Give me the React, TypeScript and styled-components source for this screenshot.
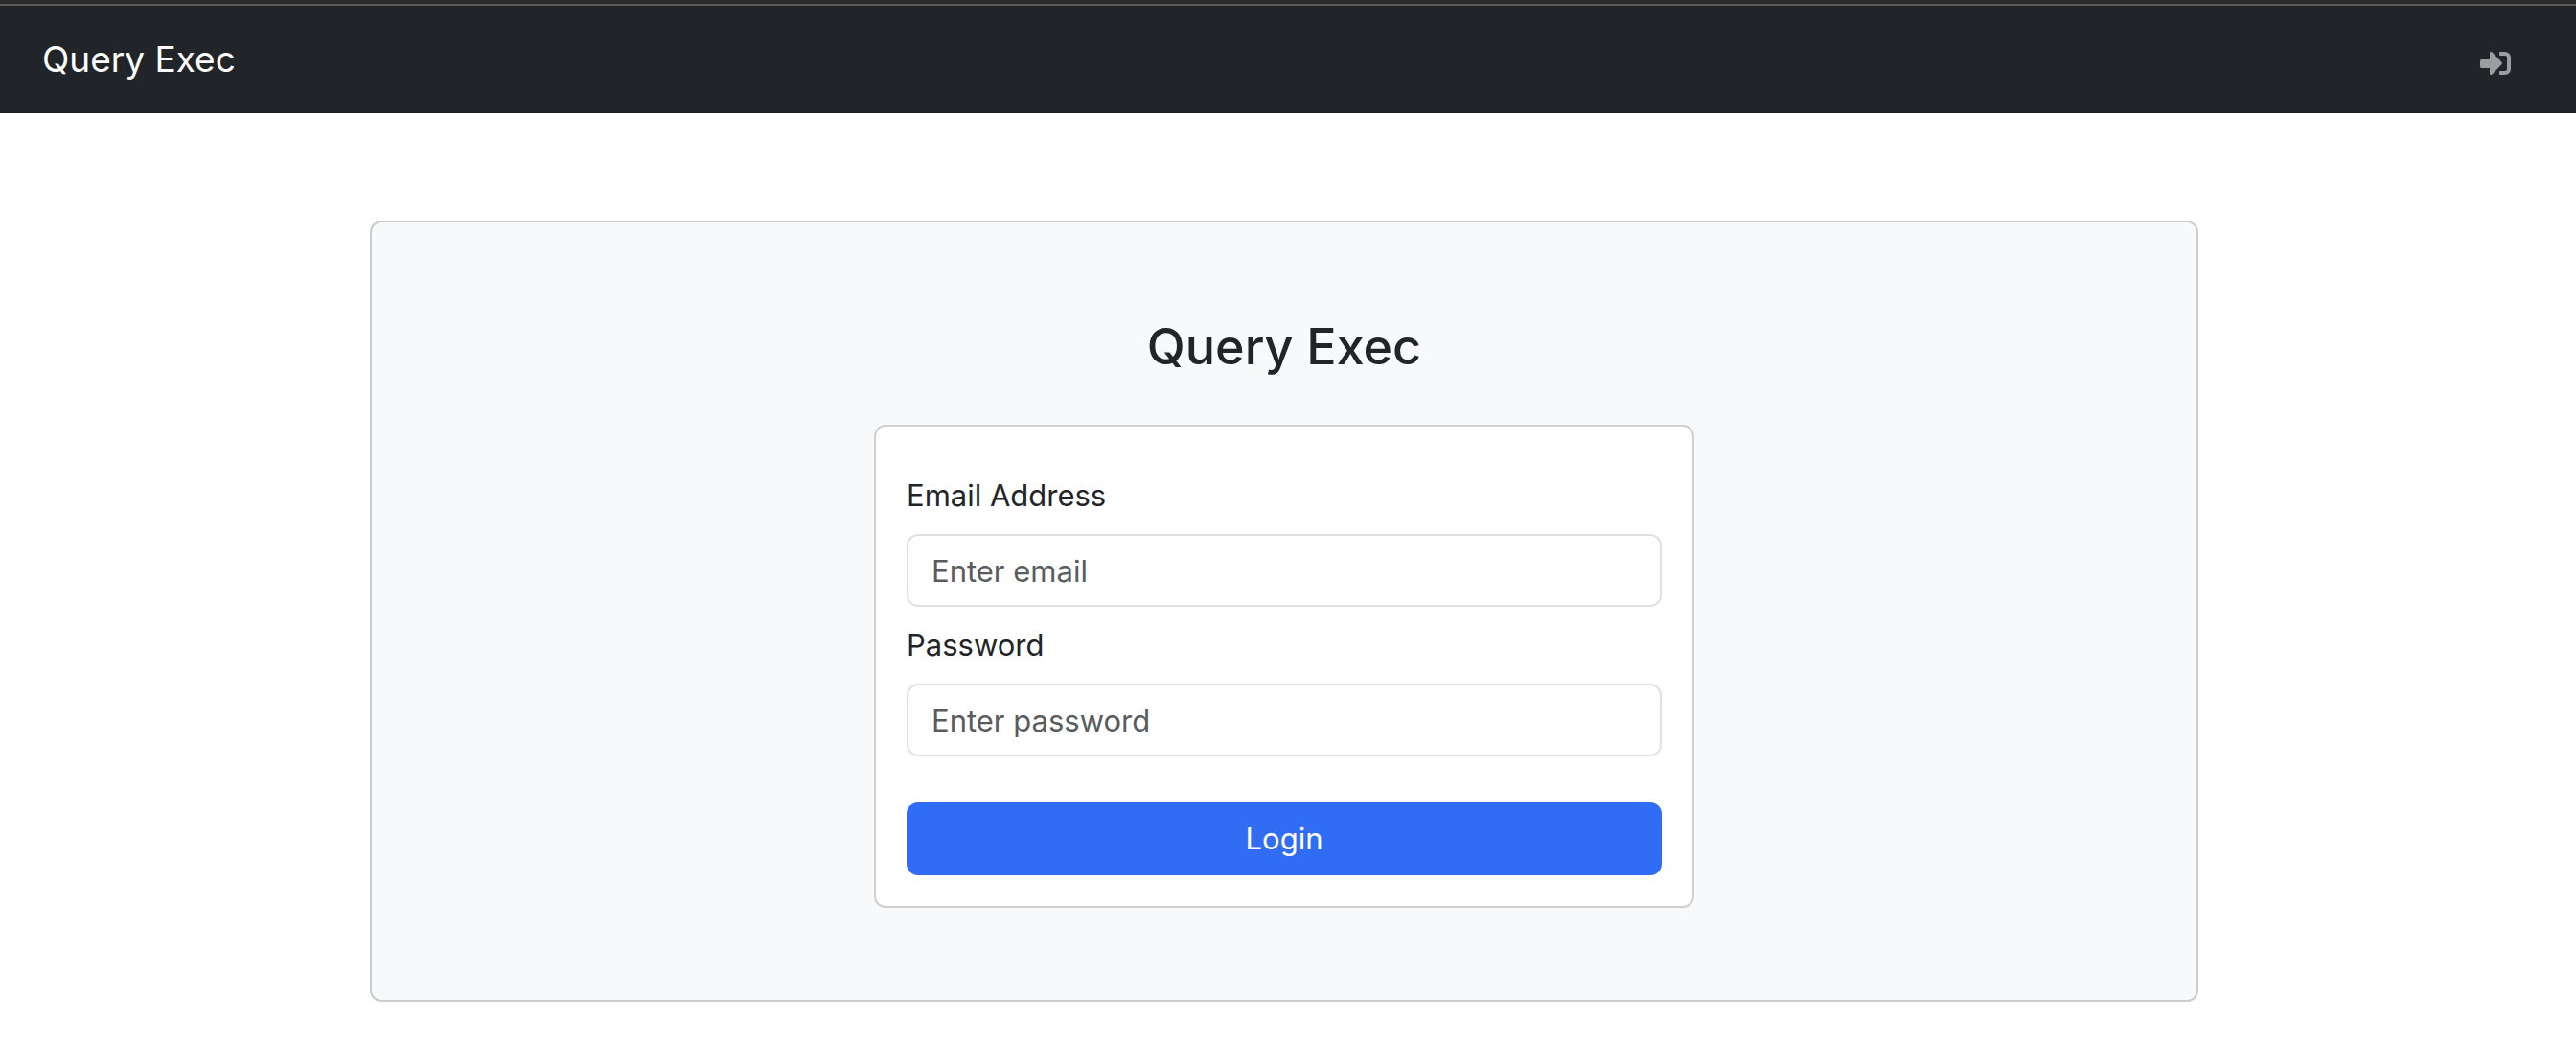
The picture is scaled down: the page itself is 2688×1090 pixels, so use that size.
import React, { useState } from "react";
import styled, { createGlobalStyle } from "styled-components";

const GlobalStyle = createGlobalStyle`
  *, *::before, *::after { box-sizing: border-box; }
  body {
    margin: 0;
    background: #fff;
    color: #212529;
    font-family: Inter, "Liberation Sans", sans-serif;
    font-size: 31px;
    line-height: 48px;
  }
`;

const TopEdge = styled.div`
  height: 6px;
  background: #2c2c2c;
  border-bottom: 2px solid #5a5a5a;
`;

const Navbar = styled.nav`
  display: flex;
  align-items: center;
  justify-content: space-between;
  height: 112px;
  padding: 0 68px 0 44px;
  background: #212529;
  border-bottom: 1px solid #241a24;
`;

const Brand = styled.a`
  color: #fff;
  font-size: 37px;
  line-height: 60px;
  text-decoration: none;
`;

const NavLink = styled.a`
  display: flex;
  padding-top: 8px;
  color: #9b9d9f;
`;

const Main = styled.main`
  display: flex;
  justify-content: center;
  padding: 112px 8px 45px 0;
`;

const Panel = styled.section`
  display: flex;
  flex-direction: column;
  align-items: center;
  gap: 48px;
  width: 100%;
  max-width: 1908px;
  padding: 96px 32px;
  background: #f8f9fb;
  border: 2px solid #cbcccd;
  border-radius: 12px;
`;

const Title = styled.h1`
  margin: 0;
  font-size: 52px;
  font-weight: 500;
  line-height: 67px;
`;

const Card = styled.form`
  display: flex;
  flex-direction: column;
  gap: 16px;
  width: 100%;
  max-width: 856px;
  padding: 48px 32px 32px;
  background: #fff;
  border: 2px solid #d0d0d0;
  border-radius: 12px;
`;

const Field = styled.div`
  display: flex;
  flex-direction: column;
  gap: 16px;
`;

const Input = styled.input`
  height: 76px;
  padding: 0 24px;
  background: #fff;
  border: 2px solid #dee2e6;
  border-radius: 12px;
  color: #212529;
  font: inherit;

  &::placeholder {
    color: #595c5f;
    opacity: 1;
  }
`;

const Submit = styled.button`
  height: 76px;
  margin-top: 32px;
  background: #316cf4;
  border: 0;
  border-radius: 12px;
  color: #fff;
  font: inherit;
  cursor: pointer;
`;

const LoginIcon = () => (
  <svg width="32" height="26" viewBox="0 0 32 26" fill="currentColor" aria-hidden="true">
    <path d="M1.500 9H10V2.200C10 .9 11.400.3 12.300 1.200L22.600 12.100c.6.600.6 1.300 0 1.900L12.300 24.800c-.9.900-2.300.3-2.300-1V18H1.500C.7 18 0 17.300 0 16.500v-6C0 9.700.7 9 1.500 9z" />
    <path d="M21 1h5a6 6 0 0 1 6 6v12a6 6 0 0 1-6 6h-5c-.6 0-1-.4-1-1v-2c0-.6.4-1 1-1h5c1.200 0 2-.8 2-2V7c0-1.200-.8-2-2-2h-5c-.6 0-1-.4-1-1V2c0-.6.4-1 1-1z" />
  </svg>
);

type TextFieldProps = {
  id: string;
  label: string;
  type: string;
  placeholder: string;
};

const TextField = ({ id, label, type, placeholder }: TextFieldProps) => {
  const [value, setValue] = useState("");
  return (
    <Field>
      <label htmlFor={id}>{label}</label>
      <Input
        id={id}
        type={type}
        placeholder={placeholder}
        value={value}
        onChange={(e) => setValue(e.target.value)}
      />
    </Field>
  );
};

export default function App() {
  return (
    <>
      <GlobalStyle />
      <TopEdge />
      <Navbar>
        <Brand href="#">Query Exec</Brand>
        <NavLink href="#login" aria-label="Login">
          <LoginIcon />
        </NavLink>
      </Navbar>
      <Main>
        <Panel>
          <Title>Query Exec</Title>
          <Card onSubmit={(e) => e.preventDefault()}>
            <TextField id="email" label="Email Address" type="email" placeholder="Enter email" />
            <TextField id="password" label="Password" type="password" placeholder="Enter password" />
            <Submit type="submit">Login</Submit>
          </Card>
        </Panel>
      </Main>
    </>
  );
}
